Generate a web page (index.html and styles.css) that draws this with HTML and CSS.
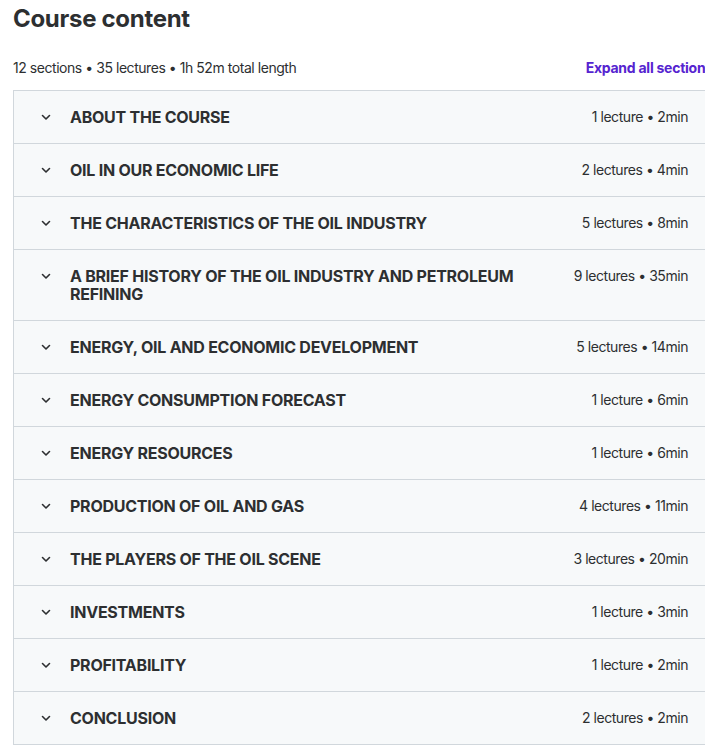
FILE: index.html
```html
<!DOCTYPE html>
<html lang="en">
<head>
<meta charset="utf-8">
<title>Course content</title>
<link rel="stylesheet" href="styles.css">
</head>
<body>
<section class="curriculum">
  <h2 class="curriculum-title">Course content</h2>
  <div class="curriculum-bar">
    <span class="curriculum-stats">12 sections • 35 lectures • 1h 52m total length</span>
    <button class="expand-all" type="button">Expand all sections</button>
  </div>
  <ul class="section-list">
    <li class="section-row">
      <svg class="chevron" viewBox="0 0 16 16" aria-hidden="true"><path d="M4.5 6.5 8 10l3.5-3.5"/></svg>
      <span class="section-name">About the course</span>
      <span class="section-meta">1 lecture • 2min</span>
    </li>
    <li class="section-row">
      <svg class="chevron" viewBox="0 0 16 16" aria-hidden="true"><path d="M4.5 6.5 8 10l3.5-3.5"/></svg>
      <span class="section-name">Oil in our economic life</span>
      <span class="section-meta">2 lectures • 4min</span>
    </li>
    <li class="section-row">
      <svg class="chevron" viewBox="0 0 16 16" aria-hidden="true"><path d="M4.5 6.5 8 10l3.5-3.5"/></svg>
      <span class="section-name">The characteristics of the oil industry</span>
      <span class="section-meta">5 lectures • 8min</span>
    </li>
    <li class="section-row">
      <svg class="chevron" viewBox="0 0 16 16" aria-hidden="true"><path d="M4.5 6.5 8 10l3.5-3.5"/></svg>
      <span class="section-name">A brief history of the oil industry and petroleum refining</span>
      <span class="section-meta">9 lectures • 35min</span>
    </li>
    <li class="section-row">
      <svg class="chevron" viewBox="0 0 16 16" aria-hidden="true"><path d="M4.5 6.5 8 10l3.5-3.5"/></svg>
      <span class="section-name">Energy, oil and economic development</span>
      <span class="section-meta">5 lectures • 14min</span>
    </li>
    <li class="section-row">
      <svg class="chevron" viewBox="0 0 16 16" aria-hidden="true"><path d="M4.5 6.5 8 10l3.5-3.5"/></svg>
      <span class="section-name">Energy consumption forecast</span>
      <span class="section-meta">1 lecture • 6min</span>
    </li>
    <li class="section-row">
      <svg class="chevron" viewBox="0 0 16 16" aria-hidden="true"><path d="M4.5 6.5 8 10l3.5-3.5"/></svg>
      <span class="section-name">Energy resources</span>
      <span class="section-meta">1 lecture • 6min</span>
    </li>
    <li class="section-row">
      <svg class="chevron" viewBox="0 0 16 16" aria-hidden="true"><path d="M4.5 6.5 8 10l3.5-3.5"/></svg>
      <span class="section-name">Production of oil and gas</span>
      <span class="section-meta">4 lectures • 11min</span>
    </li>
    <li class="section-row">
      <svg class="chevron" viewBox="0 0 16 16" aria-hidden="true"><path d="M4.5 6.5 8 10l3.5-3.5"/></svg>
      <span class="section-name">The players of the oil scene</span>
      <span class="section-meta">3 lectures • 20min</span>
    </li>
    <li class="section-row">
      <svg class="chevron" viewBox="0 0 16 16" aria-hidden="true"><path d="M4.5 6.5 8 10l3.5-3.5"/></svg>
      <span class="section-name">Investments</span>
      <span class="section-meta">1 lecture • 3min</span>
    </li>
    <li class="section-row">
      <svg class="chevron" viewBox="0 0 16 16" aria-hidden="true"><path d="M4.5 6.5 8 10l3.5-3.5"/></svg>
      <span class="section-name">Profitability</span>
      <span class="section-meta">1 lecture • 2min</span>
    </li>
    <li class="section-row">
      <svg class="chevron" viewBox="0 0 16 16" aria-hidden="true"><path d="M4.5 6.5 8 10l3.5-3.5"/></svg>
      <span class="section-name">Conclusion</span>
      <span class="section-meta">2 lectures • 2min</span>
    </li>
  </ul>
</section>
</body>
</html>
```

FILE: styles.css
```css
html, body {
  margin: 0;
  padding: 0;
  background: #ffffff;
  overflow: hidden;
}

body {
  font-family: Inter, "Noto Sans", "Liberation Sans", sans-serif;
  color: #2d2f31;
}

.curriculum {
  width: 700px;
  margin-left: 13px;
}

.curriculum-title {
  margin: 0;
  padding-top: 4px;
  font-size: 24px;
  line-height: 29px;
  font-weight: 700;
  letter-spacing: -0.3px;
}

.curriculum-bar {
  display: flex;
  justify-content: space-between;
  align-items: baseline;
  margin-top: 26px;
  margin-bottom: 13px;
  font-size: 14px;
  line-height: 18px;
}

.curriculum-stats {
  font-weight: 400;
  letter-spacing: -0.45px;
}

.expand-all {
  border: 0;
  padding: 0;
  background: none;
  font: inherit;
  font-weight: 700;
  letter-spacing: -0.25px;
  color: #5624d0;
  cursor: pointer;
}

.section-list {
  list-style: none;
  margin: 0;
  padding: 0;
  border: 1px solid #d1d7dc;
  border-bottom: 0;
}

.section-row {
  display: flex;
  align-items: flex-start;
  gap: 16px;
  padding: 17px 24px;
  background: #f7f9fa;
  border-bottom: 1px solid #d1d7dc;
}

.chevron {
  flex: none;
  width: 16px;
  height: 16px;
  margin-top: 1px;
  fill: none;
  stroke: #2d2f31;
  stroke-width: 1.6;
  stroke-linecap: round;
  stroke-linejoin: round;
}

.section-name {
  flex: 1;
  font-size: 16px;
  line-height: 18px;
  font-weight: 700;
  text-transform: uppercase;
  letter-spacing: -0.25px;
}

.section-meta {
  flex: none;
  margin-left: 24px;
  font-size: 14px;
  line-height: 18px;
  letter-spacing: -0.45px;
  white-space: nowrap;
}
```
